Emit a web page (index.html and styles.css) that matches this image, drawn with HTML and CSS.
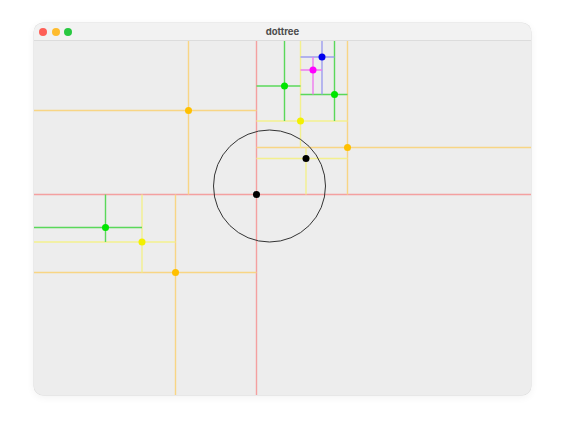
FILE: index.html
```html
<!DOCTYPE html>
<html>
<head>
<meta charset="utf-8">
<title>dottree</title>
<link rel="stylesheet" href="styles.css">
</head>
<body>
<div class="window">
  <div class="titlebar">
    <div class="lights">
      <span class="light red"></span>
      <span class="light yellow"></span>
      <span class="light green"></span>
    </div>
    <div class="title">dottree</div>
  </div>
  <svg class="canvas" viewBox="0 0 497 354" width="497" height="354">
    <g transform="translate(-34,-41)" fill="none" stroke-width="1.4">
      <g stroke="#f4a0a0">
        <line x1="34" y1="194.5" x2="531" y2="194.5"/>
        <line x1="256.5" y1="41" x2="256.5" y2="395"/>
      </g>
      <g stroke="#f8d585">
        <line x1="188.5" y1="41" x2="188.5" y2="194.5"/>
        <line x1="34" y1="110.5" x2="256.5" y2="110.5"/>
        <line x1="347.5" y1="41" x2="347.5" y2="194.5"/>
        <line x1="256.5" y1="147.5" x2="531" y2="147.5"/>
        <line x1="175.5" y1="194.5" x2="175.5" y2="395"/>
        <line x1="34" y1="272.5" x2="256.5" y2="272.5"/>
      </g>
      <g stroke="#f3f08e">
        <line x1="300.5" y1="41" x2="300.5" y2="147.5"/>
        <line x1="256.5" y1="121" x2="347.5" y2="121"/>
        <line x1="306" y1="147.5" x2="306" y2="194.5"/>
        <line x1="256.5" y1="158.5" x2="347.5" y2="158.5"/>
        <line x1="142" y1="194.5" x2="142" y2="272.5"/>
        <line x1="34" y1="242" x2="175.5" y2="242"/>
      </g>
      <g stroke="#5ad85a">
        <line x1="284.5" y1="41" x2="284.5" y2="121"/>
        <line x1="256.5" y1="86" x2="300.5" y2="86"/>
        <line x1="334.5" y1="41" x2="334.5" y2="121"/>
        <line x1="300.5" y1="94.5" x2="347.5" y2="94.5"/>
        <line x1="105.5" y1="194.5" x2="105.5" y2="242"/>
        <line x1="34" y1="227.5" x2="142" y2="227.5"/>
      </g>
      <g stroke="#9c9cee">
        <line x1="322" y1="41" x2="322" y2="94.5"/>
        <line x1="300.5" y1="57" x2="334.5" y2="57"/>
      </g>
      <g stroke="#ee7aee">
        <line x1="313" y1="57" x2="313" y2="94.5"/>
        <line x1="300.5" y1="70" x2="322" y2="70"/>
      </g>
      <circle cx="269.5" cy="186" r="56" stroke="#333" stroke-width="1"/>
      <g stroke="none">
        <circle cx="188.5" cy="110.5" r="3.5" fill="#ffc000"/>
        <circle cx="347.5" cy="147.5" r="3.5" fill="#ffc000"/>
        <circle cx="175.5" cy="272.5" r="3.5" fill="#ffc000"/>
        <circle cx="300.5" cy="121" r="3.5" fill="#f2f000"/>
        <circle cx="142" cy="242" r="3.5" fill="#f2f000"/>
        <circle cx="284.5" cy="86" r="3.5" fill="#00e600"/>
        <circle cx="334.5" cy="94.5" r="3.5" fill="#00e600"/>
        <circle cx="105.5" cy="227.5" r="3.5" fill="#00e600"/>
        <circle cx="322" cy="57" r="3.5" fill="#0000ee"/>
        <circle cx="313" cy="70" r="3.5" fill="#ff00ff"/>
        <circle cx="256.5" cy="194.5" r="3.5" fill="#000"/>
        <circle cx="306" cy="158.5" r="3.5" fill="#000"/>
      </g>
    </g>
  </svg>
</div>
</body>
</html>
```
FILE: styles.css
```css
html, body {
  margin: 0;
  padding: 0;
  background: #ffffff;
}
body {
  width: 565px;
  height: 441px;
  overflow: hidden;
  font-family: "Inter", "Liberation Sans", sans-serif;
}
.window {
  margin: 23px 0 0 34px;
  width: 497px;
  height: 372px;
  border-radius: 9px;
  overflow: hidden;
  background: #ececec;
  box-shadow: 0 0 0 0.5px rgba(0,0,0,0.12), 0 2px 8px rgba(0,0,0,0.06);
  display: flex;
  flex-direction: column;
}
.titlebar {
  height: 17px;
  flex: none;
  background: #f2f2f2;
  border-bottom: 1px solid #dcdcdc;
  display: flex;
  align-items: center;
  position: relative;
}
.lights {
  display: flex;
  gap: 4.5px;
  padding-left: 5px;
}
.light {
  width: 8px;
  height: 8px;
  border-radius: 50%;
}
.light.red { background: #fe5f57; }
.light.yellow { background: #febc2e; }
.light.green { background: #28c840; }
.title {
  position: absolute;
  left: 0;
  right: 0;
  text-align: center;
  font-size: 9.5px;
  font-weight: 700;
  color: #4d4d4d;
}
.canvas {
  display: block;
  flex: none;
  background: #ededed;
}
```
